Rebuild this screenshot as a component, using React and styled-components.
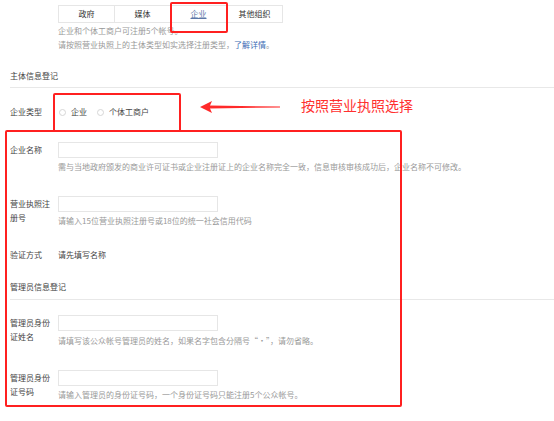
import React from "react";
import styled, { createGlobalStyle } from "styled-components";

const GlobalStyle = createGlobalStyle`
  html, body {
    margin: 0;
    padding: 0;
    background: #fff;
  }
  body {
    font-family: "Noto Sans CJK SC", "Liberation Sans", sans-serif;
    color: #333;
  }
`;

const Page = styled.div`
  position: relative;
  width: 554px;
  height: 421px;
  overflow: hidden;
  background: #fff;
  font-size: 8px;
  line-height: 14px;
`;

const Tabs = styled.div`
  display: flex;
  margin: 5px 0 0 58px;
  width: 225px;
  border: 1px solid #e6e6e6;
  box-sizing: border-box;
`;

const Tab = styled.div`
  flex: 1;
  height: 16px;
  display: flex;
  align-items: center;
  justify-content: center;
  font-size: 8px;
  color: ${(p) => (p.active ? "#5d78a8" : "#333")};
  text-decoration: ${(p) => (p.active ? "underline" : "none")};
  border-left: ${(p) => (p.first ? "none" : "1px solid #e6e6e6")};
`;

const Intro = styled.div`
  margin: 1px 0 0 58px;
  color: #999;
`;

const Link = styled.a`
  color: #3c6cb4;
  text-decoration: none;
`;

const SectionTitle = styled.div`
  margin: ${(p) => p.top}px 0 0 10px;
  color: #444;
`;

const Divider = styled.div`
  margin: ${(p) => p.top}px 0 0 10px;
  height: 1px;
  background: #e8e8e8;
`;

const Row = styled.div`
  display: grid;
  grid-template-columns: 48px 1fr;
  margin: ${(p) => p.top}px 0 0 10px;
  align-items: start;
`;

const Label = styled.div`
  color: #444;
  padding-top: ${(p) => p.pad || 0}px;
  white-space: pre-line;
`;

const Field = styled.div`
  display: flex;
  flex-direction: column;
`;

const Input = styled.div`
  width: 160px;
  height: 16px;
  border: 1px solid #e6e6e6;
  box-sizing: border-box;
`;

const Hint = styled.div`
  margin-top: ${(p) => p.top}px;
  color: #999;
  white-space: nowrap;
`;

const Value = styled.div`
  color: #444;
`;

const Radios = styled.div`
  display: flex;
  align-items: center;
  gap: 10px;
  padding-left: 1px;
`;

const Radio = styled.label`
  display: flex;
  align-items: center;
  gap: 5px;
  color: #444;
`;

const Circle = styled.span`
  width: 7px;
  height: 7px;
  border: 1px solid #d6d6d6;
  border-radius: 50%;
  box-sizing: border-box;
`;

/* annotation overlays */
const Mark = styled.div`
  position: absolute;
  left: ${(p) => p.x}px;
  top: ${(p) => p.y}px;
  width: ${(p) => p.w}px;
  height: ${(p) => p.h}px;
  border: 2px solid #ff2020;
  border-radius: 2px;
  box-sizing: border-box;
  pointer-events: none;
`;

const Note = styled.div`
  position: absolute;
  left: 301px;
  top: 96px;
  font-size: 14px;
  line-height: 18px;
  color: #ff3030;
`;

const Arrow = styled.svg`
  position: absolute;
  left: 198px;
  top: 100px;
`;

const App = () => (
  <>
    <GlobalStyle />
    <Page>
      <Tabs>
        <Tab first>政府</Tab>
        <Tab>媒体</Tab>
        <Tab active>企业</Tab>
        <Tab>其他组织</Tab>
      </Tabs>
      <Intro>
        企业和个体工商户可注册5个帐号。
        <br />
        请按照营业执照上的主体类型如实选择注册类型，<Link>了解详情</Link>。
      </Intro>

      <SectionTitle top={17}>主体信息登记</SectionTitle>
      <Divider top={4} />

      <Row top={17}>
        <Label>企业类型</Label>
        <Radios>
          <Radio>
            <Circle />
            企业
          </Radio>
          <Radio>
            <Circle />
            个体工商户
          </Radio>
        </Radios>
      </Row>

      <Row top={23}>
        <Label pad={1}>企业名称</Label>
        <Field>
          <Input />
          <Hint top={2}>
            需与当地政府颁发的商业许可证书或企业注册证上的企业名称完全一致，信息审核审核成功后，企业名称不可修改。
          </Hint>
        </Field>
      </Row>

      <Row top={22}>
        <Label pad={1}>{"营业执照注\n册号"}</Label>
        <Field>
          <Input />
          <Hint top={2}>请输入15位营业执照注册号或18位的统一社会信用代码</Hint>
        </Field>
      </Row>

      <Row top={20}>
        <Label>验证方式</Label>
        <Value>请先填写名称</Value>
      </Row>

      <SectionTitle top={18}>管理员信息登记</SectionTitle>
      <Divider top={5} />

      <Row top={15}>
        <Label pad={1}>{"管理员身份\n证姓名"}</Label>
        <Field>
          <Input />
          <Hint top={3}>请填写该公众帐号管理员的姓名，如果名字包含分隔号“·”，请勿省略。</Hint>
        </Field>
      </Row>

      <Row top={22}>
        <Label pad={1}>{"管理员身份\n证号码"}</Label>
        <Field>
          <Input />
          <Hint top={2}>请输入管理员的身份证号码，一个身份证号码只能注册5个公众帐号。</Hint>
        </Field>
      </Row>

      <Mark x={170} y={2} w={58} h={31} />
      <Mark x={53} y={93} w={128} h={39} />
      <Mark x={5} y={130} w={397} h={277} />
      <Arrow width="84" height="14" viewBox="0 0 84 14">
        <path d="M2 7 L14 1 L12 5.5 L82 6.6 L82 7.4 L12 8.5 L14 13 Z" fill="#ff2a2a" />
      </Arrow>
      <Note>按照营业执照选择</Note>
    </Page>
  </>
);

export default App;
